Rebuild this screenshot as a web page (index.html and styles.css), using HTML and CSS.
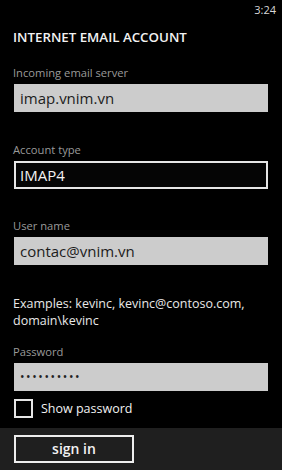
FILE: index.html
```html
<!DOCTYPE html>
<html lang="en">
<head>
    <meta charset="UTF-8">
    <meta name="viewport" content="width=device-width, initial-scale=1.0">
    <title>Internet email account</title>
    <link rel="stylesheet" href="styles.css">
</head>
<body>
    <div class="status">3:24</div>
    <div class="page">
        <h1>INTERNET EMAIL ACCOUNT</h1>
        <div class="field server">
            <label>Incoming email server</label>
            <div class="box">imap.vnim.vn</div>
        </div>
        <div class="field type">
            <label>Account type</label>
            <div class="box picker">IMAP4</div>
        </div>
        <div class="field user">
            <label>User name</label>
            <div class="box">contac@vnim.vn</div>
        </div>
        <p class="hint">Examples: kevinc, kevinc@contoso.com, domain\kevinc</p>
        <div class="field pass">
            <label>Password</label>
            <div class="box dots">&bull;&bull;&bull;&bull;&bull;&bull;&bull;&bull;&bull;&bull;</div>
        </div>
        <div class="check">
            <span class="tick"></span>
            <span>Show password</span>
        </div>
    </div>
    <div class="appbar">
        <button>sign in</button>
    </div>
</body>
</html>
```

FILE: styles.css
```css
html, body {
    margin: 0;
    height: 100%;
    background: #000;
}
body {
    font-family: "Open Sans", "Noto Sans", sans-serif;
    color: #f2f2f2;
    display: flex;
    flex-direction: column;
    overflow: hidden;
}
.status {
    height: 20px;
    font-size: 11px;
    line-height: 20px;
    text-align: right;
    padding-right: 6px;
    color: #d8d8d8;
}
.page {
    flex: 1;
    padding: 0 14px;
}
h1 {
    margin: 7px 0 0 -1px;
    font-size: 13.3px;
    font-weight: 600;
    line-height: 20px;
}
.field label {
    display: block;
    font-size: 11.2px;
    color: #9a9a9a;
    line-height: 14px;
    margin-left: -1px;
}
.box {
    margin-top: 4px;
    width: 254px;
    height: 28px;
    box-sizing: border-box;
    background: #cccccc;
    color: #1c1c1c;
    font-size: 15px;
    line-height: 28px;
    padding-left: 6px;
}
.picker {
    background: #050505;
    color: #f2f2f2;
    border: 2px solid #e6e6e6;
    line-height: 24px;
    padding-left: 4px;
}
.server {
    margin-top: 19px;
}
.type {
    margin-top: 31px;
}
.user {
    margin-top: 30px;
}
.hint {
    margin: 30px 0 0 -1px;
    font-size: 12.5px;
    line-height: 17px;
    color: #e8e8e8;
}
.pass {
    margin-top: 16px;
}
.dots {
    font-size: 12px;
    letter-spacing: 1.6px;
    padding-left: 6px;
    color: #222;
}
.check {
    display: flex;
    align-items: center;
    gap: 8px;
    margin-top: 8px;
    font-size: 12.5px;
}
.tick {
    width: 19px;
    height: 19px;
    box-sizing: border-box;
    border: 2px solid #e6e6e6;
}
.appbar {
    height: 42px;
    background: #1f1f1f;
    padding: 7px 14px 0;
    box-sizing: border-box;
}
.appbar button {
    width: 120px;
    height: 28px;
    background: transparent;
    border: 2px solid #eeeeee;
    color: #f2f2f2;
    font-family: inherit;
    font-size: 14px;
    font-weight: 600;
    padding: 0;
    line-height: 22px;
}
```
